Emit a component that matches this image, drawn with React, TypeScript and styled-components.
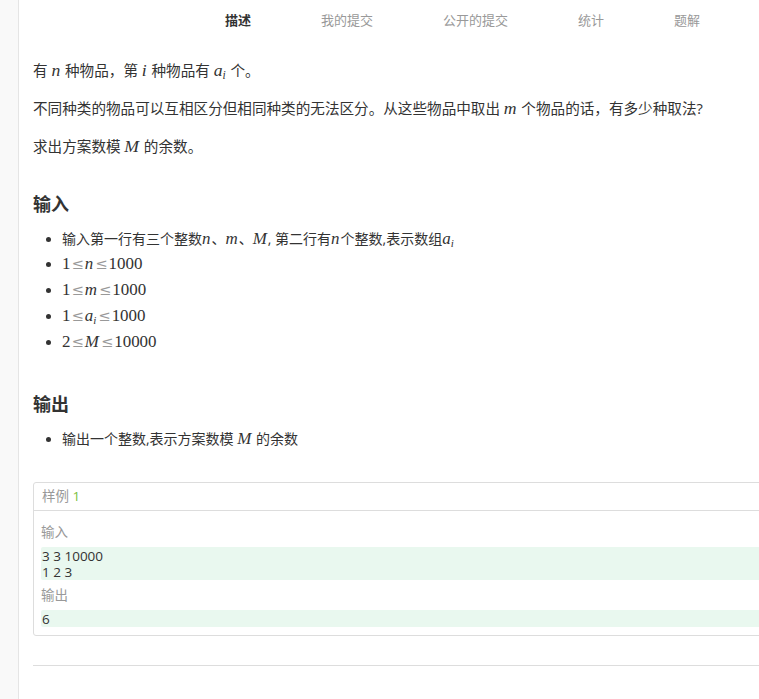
import styled, { createGlobalStyle } from 'styled-components';

const GlobalStyle = createGlobalStyle`
  html, body {
    margin: 0;
    padding: 0;
    background: #fff;
    overflow: hidden;
  }
  body {
    font-family: "Open Sans", "Noto Sans CJK SC", sans-serif;
    color: #333;
  }
`;

const Page = styled.div`
  display: flex;
  min-height: 699px;
  width: 900px;
`;

const Sidebar = styled.div`
  width: 18px;
  flex-shrink: 0;
  background-color: #f9f9f9;
  border-right: 1px solid #e5e5e5;
`;

const Main = styled.div`
  flex: 1;
  padding-left: 14px;
`;

const Tabs = styled.div`
  display: flex;
  height: 40px;
  align-items: center;
  padding-left: 157px;
`;

const Tab = styled.div<{ $active?: boolean }>`
  padding: 0 35px;
  font-size: 13px;
  line-height: 40px;
  color: ${(p) => (p.$active ? '#333' : '#999')};
  font-weight: ${(p) => (p.$active ? 600 : 400)};
`;

const Paragraph = styled.p`
  margin: 14px 0 0;
  font-size: 14.6px;
  line-height: 24px;
  &:first-of-type {
    margin-top: 18px;
  }
`;

const Heading = styled.h3<{ $top: number }>`
  margin: ${(p) => p.$top}px 0 0;
  font-size: 18px;
  line-height: 26px;
  font-weight: 700;
  color: #333;
`;

const List = styled.ul`
  margin: 10px 0 0;
  padding-left: 29px;
  font-size: 14px;
  li::marker {
    font-size: 13px;
  }
`;

const Item = styled.li<{ $math?: boolean }>`
  line-height: ${(p) => (p.$math ? 26 : 24)}px;
`;

const Var = styled.span`
  font-family: "Liberation Serif", "DejaVu Serif", serif;
  font-style: italic;
  font-size: 1.21em;
  padding-right: 1px;
`;

const Num = styled.span`
  font-family: "Liberation Serif", "DejaVu Serif", serif;
  font-size: 1.21em;
`;

const Le = styled.span`
  font-family: "DejaVu Serif", serif;
  font-size: 1.05em;
  color: #999;
  padding: 0 1px;
`;

const Sub = styled.sub`
  font-size: 0.65em;
  vertical-align: -0.25em;
  line-height: 0;
`;

const SampleBox = styled.div`
  margin-top: 31px;
  border: 1px solid #ddd;
  border-radius: 3px;
`;

const SampleHeader = styled.div`
  height: 27px;
  line-height: 27px;
  padding-left: 8px;
  font-size: 13.5px;
  color: #999;
  border-bottom: 1px solid #ddd;
`;

const SampleIndex = styled.span`
  color: #7cbf3f;
`;

const SampleBody = styled.div`
  padding: 11px 0 8px 7px;
`;

const Label = styled.div`
  font-size: 13.5px;
  line-height: 20px;
  color: #999;
  margin-bottom: 5px;
  &:not(:first-child) {
    margin-top: 5px;
  }
`;

const Pre = styled.pre`
  margin: 0;
  padding: 1px 1px 0;
  background-color: #e9f8ef;
  font-family: "Open Sans", sans-serif;
  font-size: 13.5px;
  line-height: 16px;
  color: #333;
  border-radius: 2px;
`;

const Rule = styled.hr`
  margin: 29px 0 0;
  border: none;
  border-top: 1px solid #ddd;
`;

const Ai = () => (
  <Var>
    a<Sub>i</Sub>
  </Var>
);

export default function App() {
  return (
    <>
      <GlobalStyle />
      <Page>
        <Sidebar />
        <Main>
          <Tabs>
            <Tab $active>描述</Tab>
            <Tab>我的提交</Tab>
            <Tab>公开的提交</Tab>
            <Tab>统计</Tab>
            <Tab>题解</Tab>
          </Tabs>

          <Paragraph>
            有 <Var>n</Var> 种物品，第 <Var>i</Var> 种物品有 <Ai /> 个。
          </Paragraph>
          <Paragraph>
            不同种类的物品可以互相区分但相同种类的无法区分。从这些物品中取出 <Var>m</Var> 个物品的话，有多少种取法?
          </Paragraph>
          <Paragraph>
            求出方案数模 <Var>M</Var> 的余数。
          </Paragraph>

          <Heading $top={33}>输入</Heading>
          <List>
            <Item>
              输入第一行有三个整数<Var>n</Var>、<Var>m</Var>、<Var>M</Var>, 第二行有<Var>n</Var>个整数,表示数组<Ai />
            </Item>
            <Item $math>
              <Num>1</Num>
              <Le>≤</Le>
              <Var>n</Var>
              <Le>≤</Le>
              <Num>1000</Num>
            </Item>
            <Item $math>
              <Num>1</Num>
              <Le>≤</Le>
              <Var>m</Var>
              <Le>≤</Le>
              <Num>1000</Num>
            </Item>
            <Item $math>
              <Num>1</Num>
              <Le>≤</Le>
              <Ai />
              <Le>≤</Le>
              <Num>1000</Num>
            </Item>
            <Item $math>
              <Num>2</Num>
              <Le>≤</Le>
              <Var>M</Var>
              <Le>≤</Le>
              <Num>10000</Num>
            </Item>
          </List>

          <Heading $top={36}>输出</Heading>
          <List>
            <Item>
              输出一个整数,表示方案数模 <Var>M</Var> 的余数
            </Item>
          </List>

          <SampleBox>
            <SampleHeader>
              样例 <SampleIndex>1</SampleIndex>
            </SampleHeader>
            <SampleBody>
              <Label>输入</Label>
              <Pre>{'3 3 10000\n1 2 3'}</Pre>
              <Label>输出</Label>
              <Pre>6</Pre>
            </SampleBody>
          </SampleBox>

          <Rule />
        </Main>
      </Page>
    </>
  );
}
